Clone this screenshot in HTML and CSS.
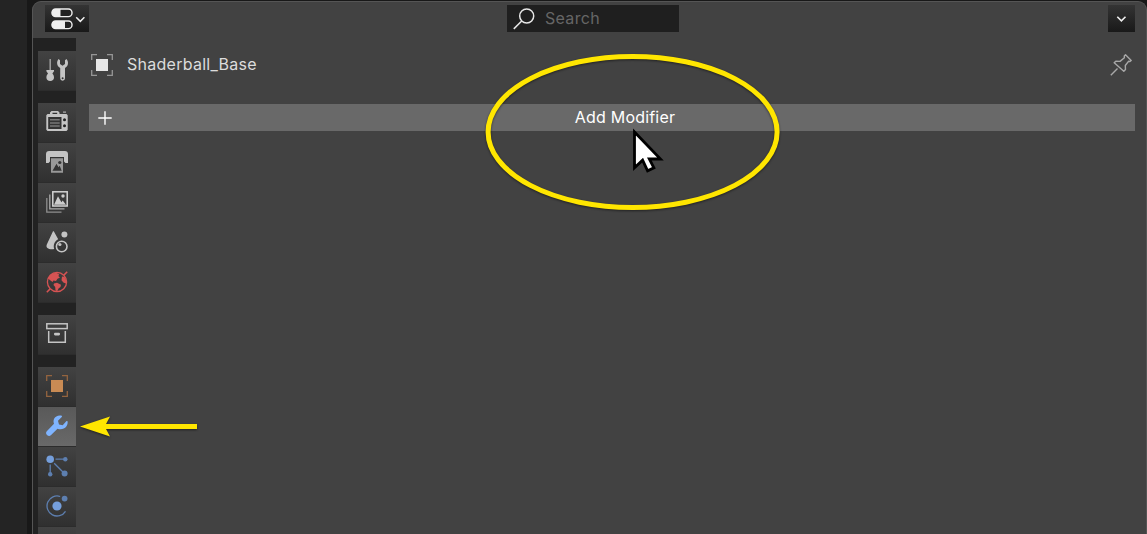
FILE: index.html
```
<!DOCTYPE html>
<html lang="en">
<head>
    <meta charset="UTF-8">
    <meta name="viewport" content="width=device-width, initial-scale=1.0">
    <title>Properties</title>
    <link rel="stylesheet" href="styles.css">
</head>
<body>
    <div class="editor">
        <header class="header">
            <button class="dark-btn editor-type" aria-label="Editor type">
                <svg width="36" height="22" viewBox="0 0 36 22">
                    <rect x="1" y="1" width="20" height="7.6" rx="3.6" fill="#222" stroke="#eee" stroke-width="1.4"/>
                    <path d="M9.5 1H4.6a3.8 3.8 0 0 0 0 7.6h4.9z" fill="#eee"/>
                    <rect x="1" y="13" width="20" height="7.6" rx="3.6" fill="#222" stroke="#eee" stroke-width="1.4"/>
                    <path d="M14 13H4.6a3.8 3.8 0 0 0 0 7.6H14z" fill="#eee"/>
                    <path d="M25.2 9.3l4.1 4.1 4.1-4.1" fill="none" stroke="#eee" stroke-width="1.5"/>
                </svg>
            </button>
            <div class="search">
                <svg width="22" height="22" viewBox="0 0 22 22" fill="none" stroke="#e6e6e6" stroke-width="1.5">
                    <circle cx="13.7" cy="8" r="7"/>
                    <path d="M8.7 13L.8 20.9"/>
                </svg>
                <span>Search</span>
            </div>
            <button class="dark-btn options" aria-label="Options">
                <svg width="11" height="8" viewBox="0 0 11 8"><path d="M1.3 1.8l4.1 4.1 4.1-4.1" fill="none" stroke="#eee" stroke-width="1.6"/></svg>
            </button>
        </header>

        <div class="content">
            <nav class="tabs">
                <div class="tab">
                    <svg width="22" height="22" viewBox="0 0 22 22" fill="#c4c4c4">
                        <path d="M3.6 0h1.1v11H8v1.3L6.4 14.5C7.4 15.6 8 17 8 18.6 8 20.7 6.5 22 4.2 22S.4 20.7.4 18.6c0-1.6.6-3 1.6-4.1L.4 12.3V11h3.2z"/>
                        <path d="M12.5 0L14 1.2V5l2.5 1.7L19 5V1.2L20.5 0C21.5 1.2 22 2.5 22 4c0 2.3-1.1 4-3 5v10.3a2.4 2.4 0 0 1-4.8 0V9c-2-1-3.1-2.7-3.1-5 0-1.5.5-2.8 1.4-4z"/>
                        <circle cx="16.6" cy="19.2" r="1" fill="#333"/>
                    </svg>
                </div>
                <div class="tab group">
                    <svg width="22" height="22" viewBox="0 0 22 22" fill="#c4c4c4">
                        <path d="M1.5 3H4V1.5L5.5 0h6.5l1.5 1.5V3h7l1.2 1.2v14.6L20.5 20h-19L.3 18.8V4.2z"/>
                        <path d="M17 .5h3v1.3h-3z" opacity=".8"/>
                        <path d="M6.5 1.8h4.7V3H6.5zM2.2 6h13.3v12H2.2z" fill="#333"/>
                        <path d="M4 8.7h9.7M4 11.9h9.7M4 15.1h9.7" stroke="#777" stroke-width="1.5"/>
                        <circle cx="18.5" cy="8.8" r="1.5" fill="#222"/>
                        <circle cx="18.5" cy="14.8" r="1.5" fill="#222"/>
                    </svg>
                </div>
                <div class="tab">
                    <svg width="22" height="22" viewBox="0 0 22 22">
                        <path d="M3.5 0h15A3.4 3.4 0 0 1 22 3.5V12h-2.5L18 10.5V6H4v4.5L2.5 12H0V3.5A3.4 3.4 0 0 1 3.5 0z" fill="#c4c4c4"/>
                        <path d="M5 7.3h12v14.5H5z" fill="#999"/>
                        <path d="M4 6.5h14" stroke="#333"/>
                        <path d="M6.5 19.8l4-7 2 3.5 1.2-1.5 2 5z" fill="#333"/>
                        <circle cx="13.8" cy="11.5" r="1.6" fill="#333"/>
                    </svg>
                </div>
                <div class="tab">
                    <svg width="22" height="22" viewBox="0 0 22 22" fill="none">
                        <path d="M.8 7v14.1h14.7" stroke="#8f8f8f" stroke-width="1.3"/>
                        <path d="M3.8 3.5v14.3h14.7" stroke="#aaa" stroke-width="1.3"/>
                        <rect x="6.8" y=".8" width="14.4" height="14.2" stroke="#d4d4d4" stroke-width="1.5"/>
                        <path d="M8 13.8l4-8.5 3.4 6 1.3-1.8 3.3 4.3z" fill="#ccc"/>
                        <circle cx="17" cy="5" r="1.7" fill="#ccc"/>
                    </svg>
                </div>
                <div class="tab">
                    <svg width="22" height="22" viewBox="0 0 22 22" fill="#c4c4c4">
                        <path d="M7 .3L.8 13.5c-.5 1.3-.4 2.6.6 3.5 1.5 1.3 4.2 1.6 6.8 1.1-1.2-4.3.4-8 4-9.8L7.800.3z"/>
                        <circle cx="18.4" cy="3.5" r="3"/>
                        <circle cx="15.7" cy="15.5" r="5.3" fill="none" stroke="#c4c4c4" stroke-width="1.6"/>
                        <circle cx="13.9" cy="13.5" r="1.6"/>
                    </svg>
                </div>
                <div class="tab">
                    <svg width="22" height="22" viewBox="0 0 22 22" fill="#d65353">
                        <circle cx="11" cy="11" r="9.6" fill="none" stroke="#d65353" stroke-width="1.3"/>
                        <path d="M.8 21.2l3.3-3.3M17.9 4.1L21.2.8" stroke="#d65353" stroke-width="1.5"/>
                        <path d="M2 7.5C3.5 4 6.500 2 10 1.800L13 3l-.5 2.200 1.500 1.300-2.500 1.300-1.500 2.200-2.500-.5-1 1.500L4.500 9.500z"/>
                        <path d="M8 12.500l3-.8 4 2-.5 2.300-2 1.500-1.200 2.700-1.800-.7-.3-3.500L7.500 14z"/>
                        <path d="M16 5.500l2.500.5 2.200 4-.3 2.500-2.700-.8-2.200-2.500z"/>
                    </svg>
                </div>
                <div class="tab group">
                    <svg width="22" height="22" viewBox="0 0 22 22" fill="none" stroke="#c4c4c4" stroke-width="1.5">
                        <rect x=".8" y=".8" width="20.4" height="4.8"/>
                        <path d="M2.7 8v11.3h16.6V8"/>
                        <rect x="8" y="9.8" width="6" height="2.6" rx="1.1" fill="#c4c4c4" stroke="none"/>
                    </svg>
                </div>
                <div class="tab group">
                    <svg width="22" height="22" viewBox="0 0 22 22">
                        <path d="M.7 6V.7H6M16 .7h5.3V6M21.3 16v5.3H16M6 21.3H.7V16" fill="none" stroke="#94643f" stroke-width="1.3"/>
                        <rect x="5" y="5" width="12" height="12" fill="#c98b54"/>
                    </svg>
                </div>
                <div class="tab active">
                    <svg width="22" height="22" viewBox="0 0 22 22">
                        <path d="M15.8.7C12.5-.1 9.2 1.2 8 3.9c-.7 1.7-.6 3.4 0 4.9L1 16a2.9 2.9 0 0 0 0 4 2.9 2.9 0 0 0 4.1 0l6.4-6.3c3.1 1.2 6.8.5 8.8-2.2 1.1-1.5 1.5-3.2 1.3-5.2L20.5 6l-3.8 4.2-3.7-.8-1-3.6 4-4z" fill="#7fb4ff"/>
                    </svg>
                </div>
                <div class="tab">
                    <svg width="22" height="22" viewBox="0 0 22 22" fill="#5d7fb0">
                        <path d="M9.5 4.2H19M4.2 9.5V19M8.2 8.2l9 9" stroke="#5d7fb0" stroke-width="1.3"/>
                        <circle cx="4.2" cy="4.2" r="3.8" fill="#759fdc"/>
                        <circle cx="19.3" cy="4.2" r="2.2"/>
                        <circle cx="4.2" cy="19.3" r="2.2"/>
                        <circle cx="18.6" cy="18.5" r="3"/>
                    </svg>
                </div>
                <div class="tab">
                    <svg width="22" height="22" viewBox="0 0 22 22" fill="#5d7fb0">
                        <path d="M14.2 1.5A10 10 0 1 0 19.5 16.3" fill="none" stroke="#5d7fb0" stroke-width="1.3"/>
                        <circle cx="11" cy="11" r="4.6" fill="#759fdc"/>
                        <circle cx="18.6" cy="3.6" r="2.9"/>
                    </svg>
                </div>
                <div class="tab"></div>
            </nav>

            <main class="panel">
                <div class="breadcrumb">
                    <svg width="22" height="22" viewBox="0 0 22 22">
                        <path d="M.7 6V.7H6M16 .7h5.3V6M21.3 16v5.3H16M6 21.3H.7V16" fill="none" stroke="#969696" stroke-width="1.3"/>
                        <rect x="5" y="5" width="12" height="12" fill="#e6e6e6"/>
                    </svg>
                    <span class="object-name">Shaderball_Base</span>
                    <svg class="pin" width="22" height="22" viewBox="0 0 22 22" fill="none" stroke="#a8a8a8" stroke-width="1.4" stroke-linejoin="round">
                        <path d="M15.5.8l5.7 5.7-1.2 1-1.5-.2-3.2 4.2.2 4-1.7 1.8L4.2 8.7l1.6-1.5 4.2.2 4.4-3.7-.1-1.7zM7.500 14.500L.8 21.200"/>
                    </svg>
                </div>
                <button class="add-modifier">
                    <svg width="14" height="14" viewBox="0 0 14 14"><path d="M7 .3v13.4M.3 7h13.4" stroke="#fff" stroke-width="1.4"/></svg>
                    <span>Add Modifier</span>
                </button>
            </main>
        </div>
    </div>

    <!-- annotations drawn over the editor -->
    <svg class="annotations" width="1147" height="534" viewBox="0 0 1147 534">
        <g class="marks">
            <ellipse cx="632.6" cy="132" rx="144.5" ry="75.5" fill="none" stroke="#ffe600" stroke-width="5"/>
            <path d="M80 426.5l30-10-4 7.5h91v5h-91l4 7.5z" fill="#ffe600"/>
        </g>
        <path d="M634.5 132v35.8l8.1-7.6 5 10.6 6.3-3-4.6-8.8h11.2z" fill="#fff" stroke="#000" stroke-width="2.8"/>
    </svg>
</body>
</html>
```

FILE: styles.css
```
* {
    box-sizing: border-box;
}

body {
    margin: 0;
    height: 534px;
    padding-left: 32px;
    overflow: hidden;
    background: linear-gradient(to right, #242424 27px, #181818 27px);
    color: #dcdcdc;
    font-family: Inter, "Liberation Sans", sans-serif;
    font-size: 16px;
}

button {
    border: none;
    padding: 0;
    color: inherit;
    font: inherit;
}

svg {
    display: block;
    flex-shrink: 0;
}

.editor {
    display: flex;
    flex-direction: column;
    height: 546px;
    margin-top: 1px;
    background-color: #424242;
    border: 1px solid #555;
    border-bottom: none;
    border-radius: 9px 9px 0 0;
    overflow: hidden;
}

.header {
    display: grid;
    grid-template-columns: 462px 172px 1fr;
    align-items: start;
    flex-shrink: 0;
    height: 36px;
    padding: 3px 11px 0 12px;
}

.dark-btn {
    display: flex;
    align-items: center;
    height: 27px;
    background: linear-gradient(#343434, #191919);
}

.editor-type {
    width: 44px;
    padding-left: 6px;
}

.options {
    width: 27px;
    justify-self: end;
    justify-content: center;
}

.search {
    display: flex;
    align-items: center;
    gap: 10px;
    height: 27px;
    padding-left: 6px;
    background-color: #1f1f1f;
    color: #666;
    letter-spacing: 0.3px;
}

.search span {
    padding-bottom: 2px;
}

.content {
    display: flex;
    flex: 1;
    min-height: 0;
}

.tabs {
    display: flex;
    flex-direction: column;
    gap: 1px;
    width: 43px;
    padding: 13px 0 0 5px;
    background-color: #222;
}

.tab {
    flex-shrink: 0;
    height: 39px;
    padding: 8px 0 0 8px;
    background: linear-gradient(#424242, #303030);
    box-shadow: 0 1px 0 #2c2c2c;
}

.tab.group {
    margin-top: 12px;
}

.tab.active {
    background: linear-gradient(#595959, #696969);
}

.panel {
    flex: 1;
    padding: 15px 11px 0 13px;
}

.breadcrumb {
    display: flex;
    align-items: center;
    height: 24px;
    padding: 0 3px 0 2px;
}

.object-name {
    margin-left: 14px;
    padding-bottom: 2px;
    letter-spacing: 0.26px;
}

.pin {
    margin-left: auto;
}

.add-modifier {
    display: flex;
    align-items: center;
    width: 100%;
    height: 27px;
    margin-top: 27px;
    padding: 0 0 0 9px;
    background-color: #696969;
    color: #fff;
    letter-spacing: 0.2px;
}

.add-modifier span {
    flex: 1;
    padding: 0 0 2px 3px;
    text-align: center;
}

.annotations {
    position: absolute;
    top: 0;
    left: 0;
    pointer-events: none;
}

.marks {
    filter: drop-shadow(0 1px 1px rgba(0, 0, 0, 0.5));
}
```
